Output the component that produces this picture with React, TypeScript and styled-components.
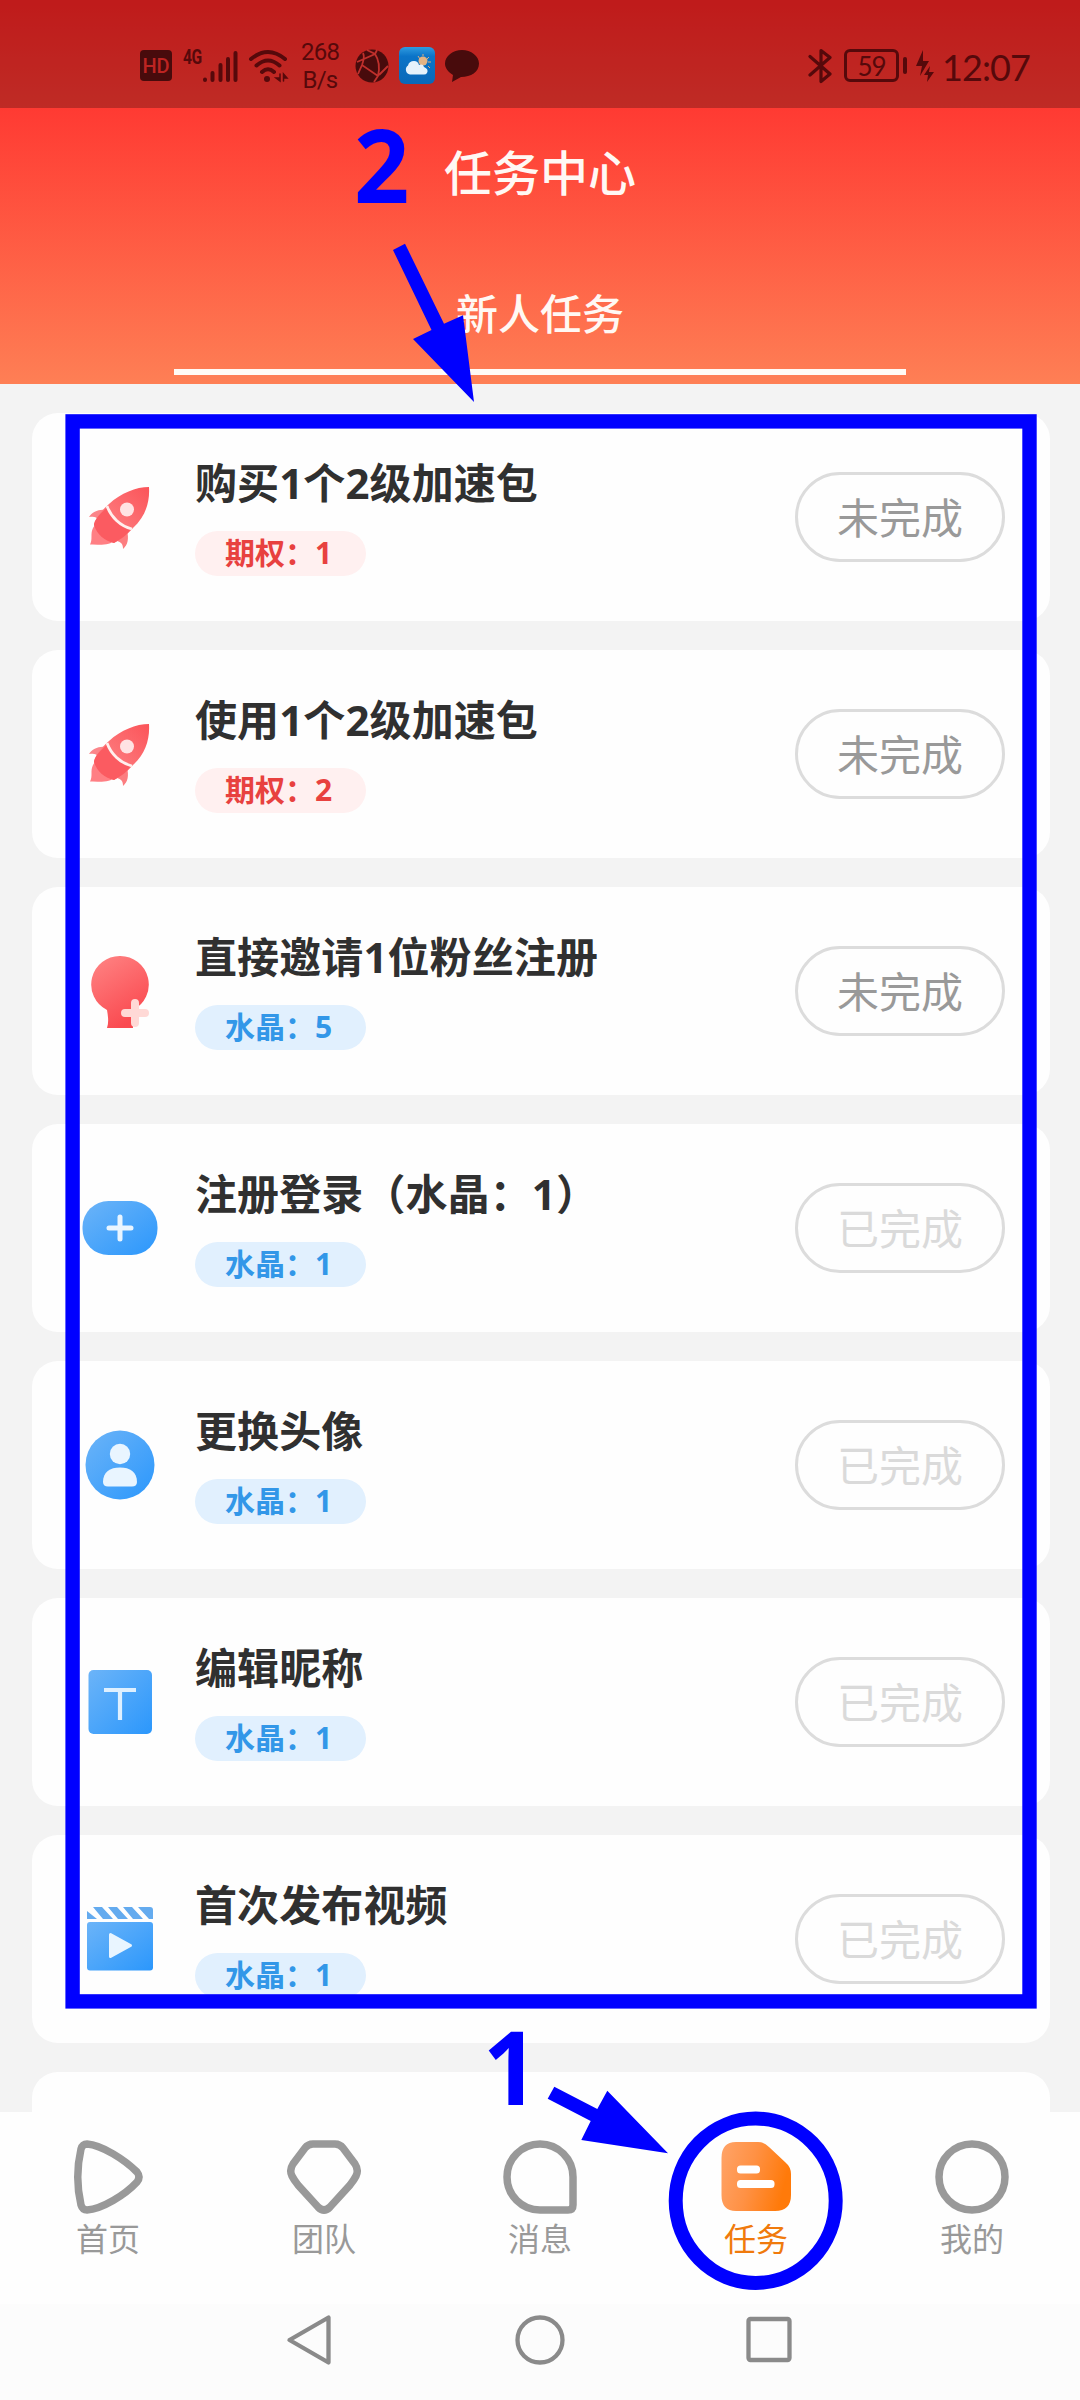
import React from 'react';
import styled, { createGlobalStyle } from 'styled-components';

const BLUE = '#0000ff';
const INK = '#56090b';

const GlobalStyle = createGlobalStyle`
  * { box-sizing: border-box; }
  body {
    margin: 0;
    background: #f3f3f3;
    font-family: "Noto Sans", "Noto Sans CJK SC", sans-serif;
  }
`;

const Screen = styled.div`
  position: relative;
  display: flex;
  flex-direction: column;
  width: 1080px;
  height: 2400px;
  overflow: hidden;
  background: #f3f3f3;
`;

const Header = styled.header`
  display: flex;
  flex-direction: column;
  flex: none;
  height: 384px;
  background: linear-gradient(180deg, #ff2424 0, #ff3b33 112px, #fe7f55 384px);
  color: #fff8f4;
`;

const StatusBar = styled.div`
  display: flex;
  align-items: center;
  justify-content: space-between;
  height: 108px;
  padding: 23px 49px 0 140px;
  background: rgba(0, 0, 0, 0.25);
  color: ${INK};
`;

const StatusGroup = styled.div<{ $gap: number }>`
  display: flex;
  align-items: center;
  gap: ${p => p.$gap}px;
`;

const HdBadge = styled.span`
  width: 32px;
  height: 31px;
  border-radius: 4px;
  background: #480b0c;
  color: #bd2422;
  font: 500 20px/32px Roboto, sans-serif;
  text-align: center;
`;

const Signal = styled.div`
  display: flex;
  gap: 1px;
  margin-left: 1px;
`;

const NetType = styled.span`
  width: 18px;
  font: 700 20px/16px "Roboto", sans-serif;
  letter-spacing: -0.5px;
  transform: scaleX(0.78);
  transform-origin: left;
`;

const Speed = styled.span`
  width: 38px;
  margin: 0 6px 0 1px;
  font: 400 24px/28px Roboto, sans-serif;
  letter-spacing: -0.8px;
  text-align: center;
  white-space: pre;
`;

const Battery = styled.span`
  width: 55px;
  height: 33px;
  border: 3px solid ${INK};
  border-radius: 6px;
  font: 400 26px/28px Lato, sans-serif;
  letter-spacing: -1px;
  text-align: center;
`;

const Knob = styled.span`
  width: 4px;
  height: 17px;
  border-radius: 2px;
  background: ${INK};
`;

const Clock = styled.span`
  margin: 2px 0 0 3px;
  width: 89px;
  font: 400 36px/42px Lato, sans-serif;
  letter-spacing: -0.9px;
  white-space: nowrap;
`;

const PageTitle = styled.h1`
  margin: 0;
  height: 126px;
  font-family: "Noto Sans CJK SC", sans-serif;
  font-weight: 500;
  font-size: 48px;
  line-height: 125px;
  text-align: center;
`;

const Tab = styled.div`
  display: flex;
  flex-direction: column;
  justify-content: space-between;
  width: 732px;
  height: 105px;
  margin: 36px auto 0;
  border-bottom: 6px solid #fffaf5;
  font-family: "Noto Sans CJK SC", sans-serif;
  font-weight: 500;
  font-size: 42px;
  line-height: 83px;
  text-align: center;
`;

const TaskList = styled.main`
  display: flex;
  flex-direction: column;
  flex: none;
  gap: 29px;
  height: 1728px;
  padding: 29px 30px 0 32px;
  overflow: hidden;
`;

const Card = styled.section`
  display: flex;
  align-items: center;
  flex: none;
  height: 208px;
  padding: 0 45px 0 48px;
  border-radius: 26px;
  background: #fefefe;
`;

const IconBox = styled.div`
  width: 80px;
  height: 80px;
  svg { display: block; }
`;

const Info = styled.div`
  display: flex;
  flex: 1;
  flex-direction: column;
  align-items: flex-start;
  gap: 18px;
  margin: -6px 0 0 35px;
`;

const TaskTitle = styled.h2`
  margin: 0;
  color: #303030;
  font-weight: 700;
  font-size: 42px;
  line-height: 60px;
  letter-spacing: 0.1px;
  white-space: nowrap;
`;

const Reward = styled.span<{ $red?: boolean }>`
  width: 171px;
  height: 45px;
  padding-left: 30px;
  border-radius: 23px;
  background: ${p => (p.$red ? '#fff0f0' : '#e1f0fe')};
  color: ${p => (p.$red ? '#e8413f' : '#3297e8')};
  font-weight: 700;
  font-size: 30px;
  line-height: 43px;
  white-space: nowrap;
`;

const StateButton = styled.button<{ $done?: boolean }>`
  width: 210px;
  height: 90px;
  padding: 0 0 3px;
  border: 3px solid #dcdcdc;
  border-radius: 45px;
  background: transparent;
  color: ${p => (p.$done ? '#dadada' : '#999')};
  font: 400 42px/81px "Noto Sans CJK SC", sans-serif;
`;

const TabBar = styled.nav`
  display: grid;
  grid-template-columns: repeat(5, 1fr);
  height: 192px;
  padding-top: 26px;
  background: #fefefe;
`;

const NavItem = styled.div<{ $active?: boolean }>`
  display: flex;
  flex-direction: column;
  align-items: center;
  color: ${p => (p.$active ? '#f07a0c' : '#999')};
  font: 400 32px/43px "Noto Sans CJK SC", sans-serif;
  svg { display: block; }
`;

const SystemBar = styled.footer`
  display: flex;
  justify-content: center;
  gap: 178px;
  height: 96px;
  padding-top: 9px;
  background: #fcfcfc;
`;

const Overlay = styled.svg`
  position: absolute;
  inset: 0;
`;

const Mark = styled.span<{ $x: number; $y: number }>`
  position: absolute;
  left: ${p => p.$x}px;
  top: ${p => p.$y}px;
  color: ${BLUE};
  font: 700 103px/104px "Noto Sans", sans-serif;
  transform: scaleX(0.94);
  transform-origin: left;
`;

type IconName = 'rocket' | 'invite' | 'plus' | 'avatar' | 'text' | 'video';

const Gradients = () => (
  <defs>
    <linearGradient id="red" x1="0" y1="0" x2="0.5" y2="1">
      <stop offset="0" stopColor="#ff8585" />
      <stop offset="1" stopColor="#fa4a50" />
    </linearGradient>
    <linearGradient id="hull" x1="1" y1="0" x2="0" y2="1">
      <stop offset="0" stopColor="#fb5459" />
      <stop offset="1" stopColor="#fe8c8e" />
    </linearGradient>
    <linearGradient id="blue" x1="0" y1="0" x2="1" y2="1">
      <stop offset="0" stopColor="#6cb4f8" />
      <stop offset="1" stopColor="#2b97fc" />
    </linearGradient>
    <linearGradient id="orange" x1="0" y1="0" x2="1" y2="0.25">
      <stop offset="0" stopColor="#ffa469" />
      <stop offset="0.5" stopColor="#ff9144" />
      <stop offset="1" stopColor="#ff7a0a" />
    </linearGradient>
    <linearGradient id="sky" x1="0" y1="0" x2="0" y2="1">
      <stop offset="0" stopColor="#2f9be0" />
      <stop offset="0.25" stopColor="#0b74c8" />
      <stop offset="1" stopColor="#0a68b8" />
    </linearGradient>
  </defs>
);

const ICONS: Record<IconName, React.ReactNode> = {
  rocket: (
    <>
      <path d="M13 51C10 57 13 62 10 67.500C18 67 24 69 31 66C38 60 30 50 16 46Z" fill="#ff7f84" />
      <path d="M25 33C19 32 12 35 9 40C14 39 17 40 18 43Z" fill="#fb858a" />
      <path d="M47 54C49 61 48 68 43 72C43 67 41 65 37 64Z" fill="#fc7d80" />
      <path d="M69 10C56 10 41 16 29 27C22 33 16 40 14 48C17 58 25 64 34 66C41 62 47 58 53 51C65 40 70 26 69 10Z" fill="url(#hull)" />
      <path d="M28 30C18 38 14 44 14 48C17 58 25 64 34 66C41 62 47 58 50 53C41 49 31 41 28 30Z" fill="#fb5b61" />
      <path d="M27 29C31 40 40 49 52 52" fill="none" stroke="#fff0ee" strokeWidth="2.800" />
      <circle cx="47" cy="32.500" r="7" fill="#ffe3e3" />
    </>
  ),
  invite: (
    <>
      <path d="M40 5A28.5 28.5 0 0 1 53 59V77H27C29 71 28 65 27 59A28.5 28.5 0 0 1 40 5Z" fill="url(#red)" />
      <path d="M55 52V72M45 62H65" stroke="#ffd9d6" strokeWidth="8" strokeLinecap="round" />
    </>
  ),
  plus: (
    <>
      <rect x="2.5" y="13" width="75" height="54" rx="26" fill="url(#blue)" />
      <path d="M40 29V51M29 40H51" stroke="#e9f5ff" strokeWidth="5" strokeLinecap="round" />
    </>
  ),
  avatar: (
    <>
      <circle cx="40" cy="40" r="34.5" fill="url(#blue)" />
      <circle cx="40" cy="29" r="10.200" fill="#e9f5ff" />
      <path d="M23 57C23 47 30 42.500 40 42.500S57 47 57 57C57 60 55 61.500 52 61.500H28C25 61.500 23 60 23 57Z" fill="#e9f5ff" />
    </>
  ),
  text: (
    <>
      <rect x="8.500" y="8" width="63.500" height="64" rx="5" fill="url(#blue)" />
      <path d="M24 28H56M40 28V58" stroke="#dff0ff" strokeWidth="4.200" />
    </>
  ),
  video: (
    <>
      <path d="M7 12L17 20H7ZM13 8H22L33 20H23ZM28 8H37L48 20H38ZM43 8H52L63 20H53ZM58 8H70Q73 8 73 11V20H69Z" fill="#64abef" />
      <rect x="7" y="23" width="66" height="48.500" rx="3" fill="url(#blue)" />
      <path d="M30.500 35.500L50.500 46.500L30.500 57.500Z" fill="#e9f5ff" stroke="#e9f5ff" strokeWidth="3" strokeLinejoin="round" />
    </>
  ),
};

interface Task {
  title: string;
  reward: string;
  icon: IconName;
  red?: boolean;
  done?: boolean;
}

const TASKS: Task[] = [
  { title: '购买1个2级加速包', reward: '期权：1', icon: 'rocket', red: true },
  { title: '使用1个2级加速包', reward: '期权：2', icon: 'rocket', red: true },
  { title: '直接邀请1位粉丝注册', reward: '水晶：5', icon: 'invite' },
  { title: '注册登录（水晶：1）', reward: '水晶：1', icon: 'plus', done: true },
  { title: '更换头像', reward: '水晶：1', icon: 'avatar', done: true },
  { title: '编辑昵称', reward: '水晶：1', icon: 'text', done: true },
  { title: '首次发布视频', reward: '水晶：1', icon: 'video', done: true },
];

const NAV: { label: string; active?: boolean; shape: React.ReactNode }[] = [
  { label: '首页', shape: <path d="M19 6C34 7 57 22 69 34Q73 39 69 44C57 57 34 71 19 72Q14.500 72 13 67Q6.500 39 13 11Q14.500 6 19 6Z" /> },
  { label: '团队', shape: <path d="M29 6H51Q56 6 59 10L71 26Q75 32 72 38Q70 42 66 47L46 69Q40 75 34 69L14 47Q10 42 8 38Q5 32 9 26L21 10Q24 6 29 6Z" /> },
  { label: '消息', shape: <path d="M40 6A33 33 0 0 1 73 39V67Q73 72 68 72H40A33 33 0 0 1 40 6Z" /> },
  { label: '任务', active: true, shape: null },
  { label: '我的', shape: <circle cx="40" cy="39" r="33" /> },
];

export default function App() {
  return (
    <Screen>
      <GlobalStyle />
      <Header>
        <StatusBar>
          <StatusGroup $gap={10}>
            <HdBadge>HD</HdBadge>
            <Signal>
              <NetType>4G</NetType>
              <svg width="36" height="34" viewBox="0 0 36 34" fill="none" stroke={INK} strokeWidth="4" strokeLinecap="round">
                <path d="M3 30.500V31M10.500 24V31M18.500 16V31M26 10V31M33.500 4V31" />
              </svg>
            </Signal>
            <svg width="42" height="36" viewBox="0 0 42 36" fill="none" stroke={INK} strokeWidth="4" strokeLinecap="round">
              <path d="M3 11Q20 -3 37 11M8.500 17.500Q20 7.500 31.500 17.500M14 24Q20 18.500 26 24" />
              <circle cx="19" cy="31" r="3" fill={INK} stroke="none" />
              <path d="M32 26V33L28 30H32M35.500 33V26L39 30H35.500" fill={INK} strokeWidth="1.500" />
            </svg>
            <Speed>{'268\nB/s'}</Speed>
            <svg width="34" height="34" viewBox="0 0 34 34">
              <circle cx="17" cy="17" r="16.500" fill="#480b0c" />
              <path d="M2 13L20 5L22 1M12 1L20 5Q26 14 23 27L19 33M23 27L7 16L3 25M7 16Q10 8 8 4M24 26L33 17" fill="none" stroke="#c0302c" strokeWidth="1.800" />
            </svg>
            <svg width="36" height="37" viewBox="0 0 36 37">
              <Gradients />
              <rect width="36" height="37" rx="6" fill="url(#sky)" />
              <g stroke="#d8b080" strokeWidth="1">
                <path d="M24 7V9M30 10L28 12M32 15H29M19 9L21 12M29 19L31 21" />
              </g>
              <circle cx="24" cy="14" r="4.500" fill="#e3b384" />
              <path d="M11 27.500A5 5 0 0 1 9 18.500Q10 14 15 14Q19 14 20 18Q24 16.500 25 20Q30 22 28 26Q27 27.500 25 27.500Z" fill="#e6f2fb" />
            </svg>
            <svg width="34" height="32" viewBox="0 0 34 32">
              <path d="M17 0C26 0 34 6 34 13.500C34 22 26 27 16 27L7 32L8 25C3 22 0 18 0 13.500C0 6 8 0 17 0Z" fill="#480b0c" />
            </svg>
          </StatusGroup>
          <StatusGroup $gap={4}>
            <svg width="32" height="36" viewBox="0 0 32 36" fill="none" stroke={INK} strokeWidth="3.200" strokeLinejoin="round" strokeLinecap="round">
              <path d="M2 8.500L22 26L13 33.500V2.500L22 9.500L2 27" />
            </svg>
            <Battery>59</Battery>
            <Knob />
            <svg width="24" height="34" viewBox="2 0 24 34" fill={INK}>
              <path d="M14 1L7 17H13L11 27L20 12H14ZM21 17L15 26H19L18 33L25 23H20Z" />
            </svg>
            <Clock>12:07</Clock>
          </StatusGroup>
        </StatusBar>
        <PageTitle>任务中心</PageTitle>
        <Tab>新人任务</Tab>
      </Header>
      <TaskList>
        {TASKS.map(task => (
          <Card key={task.title}>
            <IconBox>
              <svg width="80" height="80" viewBox="0 0 80 80">{ICONS[task.icon]}</svg>
            </IconBox>
            <Info>
              <TaskTitle>{task.title}</TaskTitle>
              <Reward $red={task.red}>{task.reward}</Reward>
            </Info>
            <StateButton $done={task.done}>{task.done ? '已完成' : '未完成'}</StateButton>
          </Card>
        ))}
        <Card />
      </TaskList>
      <TabBar>
        {NAV.map(item => (
          <NavItem key={item.label} $active={item.active}>
            <svg width="80" height="78" viewBox="0 0 80 78" fill="none" stroke="#999" strokeWidth="7.500">
              {item.active ? (
                <g stroke="none">
                  <path d="M20 4H42Q48 4 53 9L69 24Q75 29 75 36V57Q75 73 59 73H20Q5.500 73 5.500 57V20Q5.500 4 20 4Z" fill="url(#orange)" />
                  <rect x="21" y="27.500" width="23" height="8" rx="3.500" fill="#fff" />
                  <rect x="21" y="42" width="37.500" height="8" rx="3.500" fill="#fff" />
                </g>
              ) : (
                item.shape
              )}
            </svg>
            {item.label}
          </NavItem>
        ))}
      </TabBar>
      <SystemBar>
        <svg width="52" height="54" viewBox="0 0 52 54" fill="none" stroke="#8a8a8a" strokeWidth="4.300" strokeLinejoin="round">
          <path d="M44.500 4.500V49.500L5.500 27Z" />
        </svg>
        <svg width="52" height="54" viewBox="0 0 52 54" fill="none" stroke="#8a8a8a" strokeWidth="4.300">
          <circle cx="26" cy="27" r="22.500" />
        </svg>
        <svg width="52" height="54" viewBox="0 0 52 54" fill="none" stroke="#8a8a8a" strokeWidth="4.300">
          <rect x="4.500" y="6" width="41" height="41" rx="2" />
        </svg>
      </SystemBar>
      <Overlay width="1080" height="2400" viewBox="0 0 1080 2400" fill={BLUE}>
        <rect x="72.600" y="421.400" width="956.900" height="1580" fill="none" stroke={BLUE} strokeWidth="14.400" />
        <path d="M393 250L405 243.700L444 323.700L463 315.300L474 402L413 339L431.500 330Z" />
        <path d="M554.300 2086.700L597.300 2109L607.300 2090.700L668 2153.300L581.300 2140L590.700 2121L547.700 2098.700Z" />
        <ellipse cx="755.700" cy="2200.800" rx="80" ry="82.200" fill="none" stroke={BLUE} strokeWidth="14" />
      </Overlay>
      <Mark $x={354} $y={111}>2</Mark>
      <Mark $x={483} $y={2013}>1</Mark>
    </Screen>
  );
}
